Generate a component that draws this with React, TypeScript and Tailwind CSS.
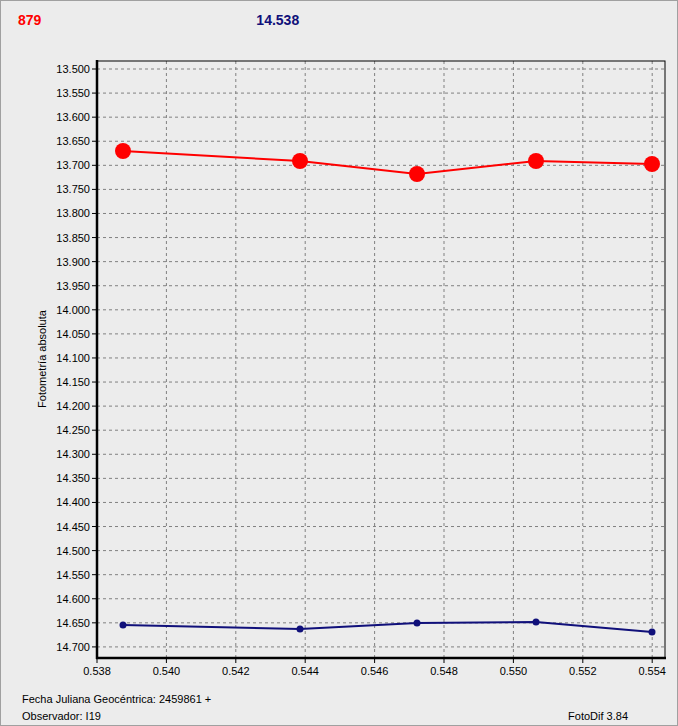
const yLabels = Array.from({ length: 25 }, (_, i) => 13.5 + i * 0.05);
const xLabels = [0.538, 0.54, 0.542, 0.544, 0.546, 0.548, 0.55, 0.552, 0.554];
const yPos = (v: number) => 68 + ((v - 13.5) / 0.05) * 24.08;
const xPos = (v: number) => 96 + ((v - 0.538) / 0.002) * 69.4;

const red = [
  [122, 150],
  [299, 160],
  [416, 173],
  [535, 160],
  [651, 163],
];
const blue = [
  [122, 624],
  [299, 628],
  [416, 622],
  [535, 621],
  [651, 631],
];

export default function App() {
  return (
    <div
      className="relative h-[726px] w-[678px] border border-[#a0a0a0] bg-[#ececec] text-black"
      style={{ fontFamily: '"Liberation Sans", Arial, sans-serif' }}
    >
      <div className="flex h-[40px] items-start pt-[9px] text-[14px] font-bold">
        <span className="ml-[17px] text-[#ff0000]">879</span>
        <span className="ml-[215px] text-[#10107a]">14.538</span>
      </div>
      <svg width="676" height="640" className="block" viewBox="0 40 676 640">
        {yLabels.map((v) => (
          <g key={v}>
            <line x1={96} x2={664} y1={yPos(v)} y2={yPos(v)} stroke="#808080" strokeDasharray="3 3" />
            <line x1={91} x2={96} y1={yPos(v)} y2={yPos(v)} stroke="#000" />
            <text x={89} y={yPos(v) + 4} textAnchor="end" fontSize="11" fill="#000">
              {v.toFixed(3)}
            </text>
          </g>
        ))}
        {xLabels.map((v) => (
          <g key={v}>
            {v > 0.538 && (
              <line x1={xPos(v)} x2={xPos(v)} y1={60} y2={657} stroke="#808080" strokeDasharray="3 3" />
            )}
            <line x1={xPos(v)} x2={xPos(v)} y1={657} y2={662} stroke="#000" />
            <text x={xPos(v)} y={674} textAnchor="middle" fontSize="11" fill="#000">
              {v.toFixed(3)}
            </text>
          </g>
        ))}
        <rect x={96} y={60} width={568} height={597} fill="none" stroke="#000" strokeWidth="1" />
        <line x1={96} x2={96} y1={59} y2={658} stroke="#000" strokeWidth="2.5" />
        <line x1={95} x2={665} y1={657} y2={657} stroke="#000" strokeWidth="2.5" />
        <text transform="translate(45 358) rotate(-90)" textAnchor="middle" fontSize="11" fill="#000">
          Fotometría absoluta
        </text>
        <polyline points={red.map((p) => p.join(",")).join(" ")} fill="none" stroke="#ff0000" strokeWidth="2" />
        {red.map(([x, y]) => (
          <circle key={x} cx={x} cy={y} r={8} fill="#ff0000" />
        ))}
        <polyline points={blue.map((p) => p.join(",")).join(" ")} fill="none" stroke="#10107a" strokeWidth="2" />
        {blue.map(([x, y]) => (
          <circle key={x} cx={x} cy={y} r={3.5} fill="#10107a" />
        ))}
      </svg>
      <div className="mt-[10px] px-[21px] text-[11px] leading-[17px]">
        <div>Fecha Juliana Geocéntrica: 2459861 +</div>
        <div className="flex justify-between pr-[28px]">
          <span>Observador: I19</span>
          <span>FotoDif 3.84</span>
        </div>
      </div>
    </div>
  );
}
